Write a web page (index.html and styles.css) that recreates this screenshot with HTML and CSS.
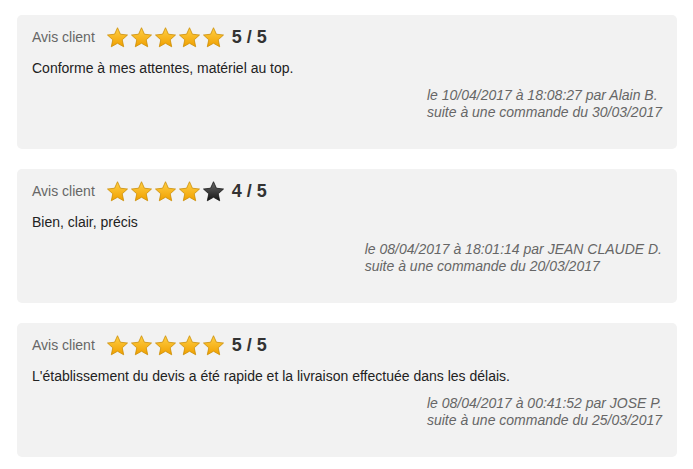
FILE: index.html
```html
<!DOCTYPE html>
<html lang="fr">
<head>
    <meta charset="UTF-8">
    <meta name="viewport" content="width=device-width, initial-scale=1.0">
    <title>Avis clients</title>
    <link rel="stylesheet" href="styles.css">
</head>
<body>
    <svg class="defs" width="0" height="0" aria-hidden="true">
        <defs>
            <linearGradient id="gold" x1="0" y1="0" x2="0" y2="1">
                <stop offset="0" stop-color="#ffcf45"/>
                <stop offset="1" stop-color="#f0a000"/>
            </linearGradient>
            <linearGradient id="dark" x1="0" y1="0" x2="0" y2="1">
                <stop offset="0" stop-color="#6a6a6a"/>
                <stop offset="1" stop-color="#151515"/>
            </linearGradient>
            <symbol id="star" viewBox="0 0 24 24">
                <path d="M12 1.8L15.06 8.59L22.46 9.4L16.95 14.41L18.47 21.7L12 18L5.53 21.7L7.05 14.41L1.54 9.4L8.94 8.59Z" stroke-linejoin="round"/>
            </symbol>
        </defs>
    </svg>

    <div class="review">
        <div class="review-head">
            <span class="label">Avis client</span>
            <span class="stars">
                <svg class="star on"><use href="#star"/></svg>
                <svg class="star on"><use href="#star"/></svg>
                <svg class="star on"><use href="#star"/></svg>
                <svg class="star on"><use href="#star"/></svg>
                <svg class="star on"><use href="#star"/></svg>
            </span>
            <span class="score">5 / 5</span>
        </div>
        <p class="comment">Conforme à mes attentes, matériel au top.</p>
        <p class="meta">le 10/04/2017 à 18:08:27 par Alain B.<br>suite à une commande du 30/03/2017</p>
    </div>

    <div class="review">
        <div class="review-head">
            <span class="label">Avis client</span>
            <span class="stars">
                <svg class="star on"><use href="#star"/></svg>
                <svg class="star on"><use href="#star"/></svg>
                <svg class="star on"><use href="#star"/></svg>
                <svg class="star on"><use href="#star"/></svg>
                <svg class="star off"><use href="#star"/></svg>
            </span>
            <span class="score">4 / 5</span>
        </div>
        <p class="comment">Bien, clair, précis</p>
        <p class="meta">le 08/04/2017 à 18:01:14 par JEAN CLAUDE D.<br>suite à une commande du 20/03/2017</p>
    </div>

    <div class="review">
        <div class="review-head">
            <span class="label">Avis client</span>
            <span class="stars">
                <svg class="star on"><use href="#star"/></svg>
                <svg class="star on"><use href="#star"/></svg>
                <svg class="star on"><use href="#star"/></svg>
                <svg class="star on"><use href="#star"/></svg>
                <svg class="star on"><use href="#star"/></svg>
            </span>
            <span class="score">5 / 5</span>
        </div>
        <p class="comment">L'établissement du devis a été rapide et la livraison effectuée dans les délais.</p>
        <p class="meta">le 08/04/2017 à 00:41:52 par JOSE P.<br>suite à une commande du 25/03/2017</p>
    </div>
</body>
</html>
```

FILE: styles.css
```css
body {
    font-family: "Liberation Sans", Arial, sans-serif;
    background-color: #fff;
    color: #222;
    margin: 15px 16px 0 17px;
    display: flex;
    flex-direction: column;
    gap: 20px;
}

.defs {
    position: absolute;
}

.review {
    background-color: #f2f2f2;
    border-radius: 5px;
    padding: 10px 15px 0 15px;
    height: 124px;
}

.review-head {
    display: flex;
    align-items: center;
    height: 24px;
}

.label {
    font-size: 14px;
    color: #666;
    margin-right: 11px;
}

.stars {
    display: flex;
    gap: 1px;
}

.star {
    width: 23px;
    height: 23px;
}

.star.on {
    fill: url(#gold);
    stroke: #c98b00;
    stroke-width: 0.8;
}

.star.off {
    fill: url(#dark);
    stroke: #111;
    stroke-width: 0.8;
}

.score {
    font-size: 18px;
    font-weight: bold;
    color: #333;
    margin-left: 7px;
    margin-top: 1px;
}

.comment {
    font-size: 14px;
    line-height: 20px;
    margin: 9px 0 0 0;
}

.meta {
    font-size: 14px;
    line-height: 17px;
    font-style: italic;
    color: #666;
    text-align: left;
    margin: 9px 0 0 auto;
    width: fit-content;
}
```
